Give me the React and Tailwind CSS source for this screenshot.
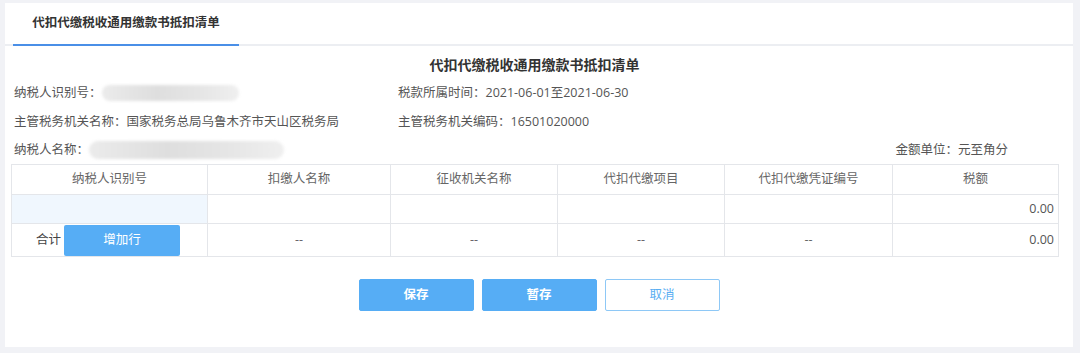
import React from "react";

const cols = [
  { title: "纳税人识别号", w: "w-[196px]" },
  { title: "扣缴人名称", w: "w-[183px]" },
  { title: "征收机关名称", w: "w-[167px]" },
  { title: "代扣代缴项目", w: "w-[167px]" },
  { title: "代扣代缴凭证编号", w: "w-[168px]" },
  { title: "税额", w: "w-[166px]" },
];

function Blur({ className }) {
  return (
    <span
      className={
        "inline-block rounded-full bg-[linear-gradient(90deg,#ebebeb,#dedede_40%,#e5e5e5_70%,#efefef)] blur-[1.5px] " +
        className
      }
    />
  );
}

export default function App() {
  const cell = "border border-[#e4e6ea]";

  return (
    <div
      className="h-[353px] w-[1080px] bg-[#f1f2f6] pl-[5px] pr-[7px] pt-[3px] text-[12.5px] text-[#555]"
      style={{ fontFamily: '"Open Sans", "Noto Sans CJK SC", sans-serif' }}
    >
      <div className="h-[344px] bg-white">
        {/* tab bar */}
        <div className="flex h-[43px] items-end border-b-2 border-[#eceef2]">
          <div className="ml-[8px] -mb-[2px] flex h-[43px] w-[226px] items-center justify-center border-b-2 border-[#4a8fe7] pb-[1px] font-bold text-[#333]">
            代扣代缴税收通用缴款书抵扣清单
          </div>
        </div>

        <div className="ml-[6px] mr-[15px]">
          <h1 className="mt-[9px] h-[20px] text-center text-[14px] leading-[20px] font-bold text-[#333]">
            代扣代缴税收通用缴款书抵扣清单
          </h1>

          <div className="mt-[9px] grid grid-cols-[384px_1fr] gap-y-[11px] pl-[3px] leading-[18px]">
            <div className="flex items-center">
              <span>纳税人识别号：</span>
              <Blur className="h-[16px] w-[137px]" />
            </div>
            <div>税款所属时间：2021-06-01至2021-06-30</div>
            <div>主管税务机关名称：国家税务总局乌鲁木齐市天山区税务局</div>
            <div>主管税务机关编码：16501020000</div>
          </div>

          <div className="mt-[10px] flex items-center justify-between pl-[3px] leading-[18px]">
            <div className="flex items-center">
              <span>纳税人名称：</span>
              <Blur className="h-[18px] w-[195px]" />
            </div>
            <div className="pr-[50px]">金额单位：元至角分</div>
          </div>

          <table className="mt-[5px] w-[1047px] table-fixed border-collapse">
            <thead>
              <tr className="h-[30px] text-[#666]">
                {cols.map((c) => (
                  <th key={c.title} className={`${cell} ${c.w} font-normal`}>
                    {c.title}
                  </th>
                ))}
              </tr>
            </thead>
            <tbody>
              <tr className="h-[29px]">
                <td className={`${cell} bg-[#f0f7fe]`} />
                <td className={cell} />
                <td className={cell} />
                <td className={cell} />
                <td className={cell} />
                <td className={`${cell} pr-[4px] text-right text-[#555]`}>0.00</td>
              </tr>
              <tr className="h-[33px]">
                <td className={`${cell} p-0`}>
                  <div className="flex h-[32px] items-center">
                    <span className="ml-[24px] mr-[3px] text-[#444]">合计</span>
                    <button className="h-[31px] w-[116px] rounded-[2px] bg-[#56adf5] text-white">
                      增加行
                    </button>
                  </div>
                </td>
                <td className={`${cell} text-center text-[#666]`}>--</td>
                <td className={`${cell} text-center text-[#666]`}>--</td>
                <td className={`${cell} text-center text-[#666]`}>--</td>
                <td className={`${cell} text-center text-[#666]`}>--</td>
                <td className={`${cell} pr-[4px] text-right text-[#555]`}>0.00</td>
              </tr>
            </tbody>
          </table>

          <div className="mt-[22px] flex justify-center gap-[8px] pl-[9px]">
            <button className="h-[32px] w-[115px] rounded-[2px] border border-[#56adf5] bg-[#56adf5] font-bold text-white">
              保存
            </button>
            <button className="h-[32px] w-[115px] rounded-[2px] border border-[#56adf5] bg-[#56adf5] font-bold text-white">
              暂存
            </button>
            <button className="h-[32px] w-[115px] rounded-[2px] border border-[#8ec8f6] bg-white text-[#5aaef2]">
              取消
            </button>
          </div>
        </div>
      </div>
    </div>
  );
}
